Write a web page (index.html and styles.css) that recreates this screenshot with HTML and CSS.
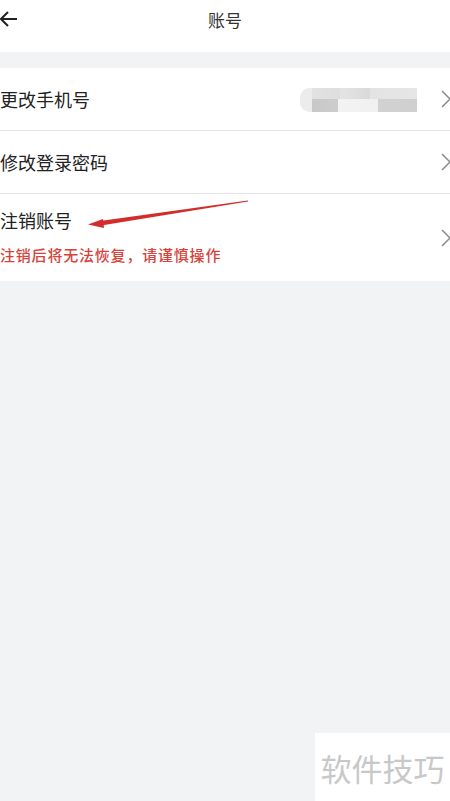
FILE: index.html
```html
<!DOCTYPE html>
<html lang="zh-CN">
<head>
    <meta charset="UTF-8">
    <meta name="viewport" content="width=device-width, initial-scale=1.0">
    <title>账号</title>
    <link rel="stylesheet" href="styles.css">
</head>
<body>

<div class="header">
    <svg class="back" width="20" height="18" viewBox="0 0 20 18">
        <path d="M18 9H2M9 2L2 9l7 7" fill="none" stroke="#222" stroke-width="2"/>
    </svg>
    <div class="title">账号</div>
</div>

<div class="list">
    <div class="row">
        <div class="label">更改手机号</div>
        <div class="right">
            <div class="phone">
                <div class="phone-top"></div>
                <div class="phone-bottom"></div>
            </div>
            <svg class="chevron" width="11" height="18" viewBox="0 0 11 18"><path d="M1 1l8 8-8 8" fill="none" stroke="#888" stroke-width="1.5"/></svg>
        </div>
    </div>
    <div class="row">
        <div class="label">修改登录密码</div>
        <svg class="chevron" width="11" height="18" viewBox="0 0 11 18"><path d="M1 1l8 8-8 8" fill="none" stroke="#888" stroke-width="1.5"/></svg>
    </div>
    <div class="row row-tall">
        <div class="texts">
            <div class="label">注销账号</div>
            <div class="warn">注销后将无法恢复，请谨慎操作</div>
        </div>
        <svg class="chevron" width="11" height="18" viewBox="0 0 11 18"><path d="M1 1l8 8-8 8" fill="none" stroke="#888" stroke-width="1.5"/></svg>
    </div>
</div>

<!-- arrow drawn over the screenshot -->
<svg class="mark" width="450" height="260" viewBox="0 0 450 260">
    <polygon points="248,200.5 100,221 101,225.5 248,201.5" fill="#d42b2b"/>
    <polygon points="88,224.5 103,219 104,228" fill="#d42b2b"/>
</svg>

<div class="watermark">软件技巧</div>

</body>
</html>
```

FILE: styles.css
```css
body {
    margin: 0;
    background-color: #f2f3f5;
    font-family: "Noto Sans CJK SC", sans-serif;
    color: #222;
    height: 801px;
    position: relative;
    overflow: hidden;
}

.header {
    height: 52px;
    background-color: #fff;
    display: flex;
    align-items: center;
    justify-content: center;
    position: relative;
}

.back {
    position: absolute;
    left: -1px;
    top: 10px;
}

.title {
    font-size: 17px;
    color: #333;
    margin-top: -13px;
}

.list {
    margin-top: 16px;
    background-color: #fff;
}

.row {
    height: 62px;
    display: flex;
    align-items: center;
    justify-content: space-between;
    border-bottom: 1px solid #e6e6e6;
}

.row-tall {
    height: 87px;
    border-bottom: none;
}

.label {
    font-size: 18px;
    color: #222;
}

.texts {
    display: flex;
    flex-direction: column;
    gap: 11px;
    margin-top: -4px;
}

.warn {
    font-size: 15px;
    letter-spacing: 0.8px;
    font-weight: 500;
    color: #d5443c;
}

.right {
    display: flex;
    align-items: center;
    gap: 24px;
}

.chevron {
    margin-right: -2px;
}

.phone {
    width: 117px;
    height: 24px;
    border-radius: 10px 0 0 10px;
    overflow: hidden;
    background-color: #e8e8e8;
    margin-top: 2px;
}

.phone-top {
    height: 11px;
    background: linear-gradient(90deg, #ececec 0, #ececec 12px, #e2e2e2 12px, #dedede 40px, #e4e4e4 40px, #d9d9d9 70px, #e3e3e3 70px, #e6e6e6 117px);
}

.phone-bottom {
    height: 13px;
    background: linear-gradient(90deg, #ececec 0, #ececec 12px, #c8c8c8 12px, #cdcdcd 38px, #f3f3f3 38px, #f0f0f0 78px, #d2d2d2 78px, #cfcfcf 117px);
}

.mark {
    position: absolute;
    left: 0;
    top: 0;
}

.watermark {
    position: absolute;
    right: 0;
    bottom: 0;
    width: 135px;
    height: 68px;
    background-color: #fff;
    color: #c8c8c8;
    font-size: 31px;
    display: flex;
    align-items: center;
    justify-content: center;
}
```
